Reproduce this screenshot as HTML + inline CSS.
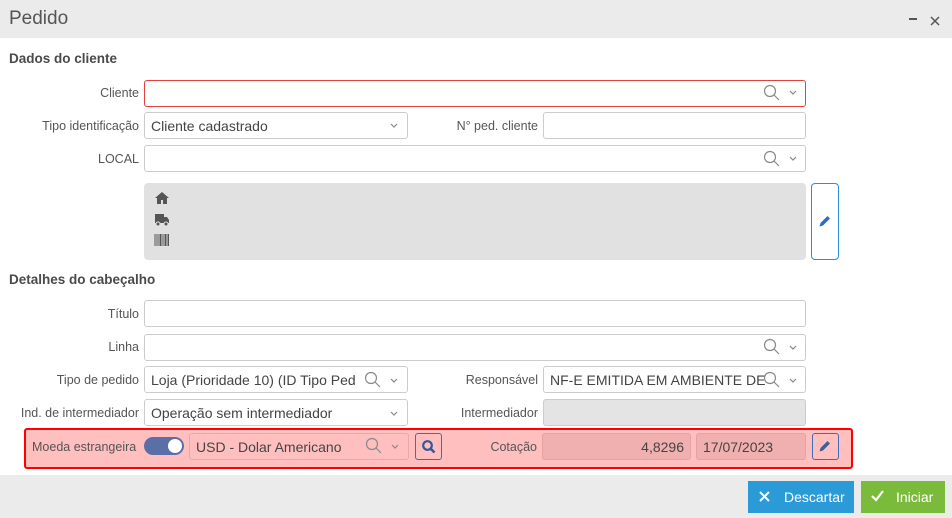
<!DOCTYPE html><html><head><meta charset="utf-8"><style>
*{box-sizing:border-box;margin:0;padding:0}
body{width:952px;height:518px;background:#fff;font-family:"Liberation Sans",sans-serif;position:relative;overflow:hidden;color:#555}
.a{position:absolute}
.hdr{left:0;top:0;width:952px;height:38px;background:#ebebeb}
.lbl{font-size:12.5px;color:#555;text-align:right}
.in{border:1px solid #ccc;border-radius:3px;background:#fff;height:27px;font-size:14px;color:#444;padding:5px 6px;white-space:nowrap;overflow:hidden}
.sec{font-size:13.5px;font-weight:bold;color:#4a4a4a}
</style></head><body>
<div class="a hdr"></div>
<div class="a" style="left:9px;top:8px;font-size:19px;color:#555">Pedido</div>
<div class="a" style="left:909px;top:18px;width:8px;height:2px;background:#555"></div>
<div class="a" style="left:930px;top:13px;width:10px;height:10px"><svg width="10" height="10"><path d="M1 1L9 9M9 1L1 9" stroke="#555" stroke-width="1.5"/></svg></div>
<div class="a sec" style="left:9px;top:51px">Dados do cliente</div>

<div class="a lbl" style="left:0;width:139px;top:86px">Cliente</div>
<div class="a in" style="left:144px;top:80px;width:662px;height:27px;border-color:#e0413a"></div>
<div class="a lbl" style="left:0;width:139px;top:119px">Tipo identificação</div>
<div class="a in" style="left:144px;top:112px;width:264px">Cliente cadastrado</div>
<div class="a lbl" style="left:400px;width:138px;top:119px">N° ped. cliente</div>
<div class="a in" style="left:543px;top:112px;width:263px"></div>
<div class="a lbl" style="left:0;width:139px;top:152px">LOCAL</div>
<div class="a in" style="left:144px;top:145px;width:662px"></div>
<div class="a" style="left:144px;top:183px;width:662px;height:77px;background:#e1e1e1;border-radius:4px"></div>
<svg class="a" style="left:154px;top:191px" width="16" height="14"><path d="M8 1L1 7h2v6h4V9h2v4h4V7h2z" fill="#555"/></svg>
<svg class="a" style="left:154px;top:213px" width="16" height="13"><path d="M1 1h9v9H1zM10 4h3l2 3v3h-5z" fill="#555"/><circle cx="4" cy="11" r="2" fill="#555" stroke="#e1e1e1"/><circle cx="12" cy="11" r="2" fill="#555" stroke="#e1e1e1"/></svg>
<svg class="a" style="left:154px;top:234px" width="16" height="12"><path d="M1 0v12M3 0v12M5 0v12M6.5 0v12M8 0v12M10 0v12M11.5 0v12M13 0v12M14.5 0v12" stroke="#555" stroke-width="1"/></svg>
<div class="a" style="left:811px;top:183px;width:28px;height:77px;border:1px solid #2b8fd6;border-radius:4px;background:#fff"></div>
<svg class="a" style="left:818px;top:214px" width="14" height="14"><path d="M1.5 12.5l1-3.5 7-7 2.5 2.5-7 7z" fill="#2b6fc0"/></svg>

<div class="a sec" style="left:9px;top:272px">Detalhes do cabeçalho</div>
<div class="a lbl" style="left:0;width:139px;top:307px">Título</div>
<div class="a in" style="left:144px;top:300px;width:662px"></div>
<div class="a lbl" style="left:0;width:139px;top:340px">Linha</div>
<div class="a in" style="left:144px;top:334px;width:662px"></div>
<div class="a lbl" style="left:0;width:139px;top:373px">Tipo de pedido</div>
<div class="a in" style="left:144px;top:366px;width:264px;padding-right:50px">Loja (Prioridade 10) (ID Tipo Ped</div>
<div class="a lbl" style="left:400px;width:138px;top:373px">Responsável</div>
<div class="a in" style="left:543px;top:366px;width:263px;padding-right:50px">NF-E EMITIDA EM AMBIENTE DE</div>
<div class="a lbl" style="left:0;width:139px;top:406px">Ind. de intermediador</div>
<div class="a in" style="left:144px;top:399px;width:264px">Operação sem intermediador</div>
<div class="a lbl" style="left:400px;width:138px;top:406px">Intermediador</div>
<div class="a in" style="left:543px;top:399px;width:263px;background:#e4e4e4"></div>

<div class="a" style="left:24px;top:428px;width:829px;height:41px;background:#ffbfbf;border:2px solid #f00;border-radius:3px"></div>
<div class="a lbl" style="left:32px;top:440px;font-size:12.5px">Moeda estrangeira</div>
<div class="a" style="left:144px;top:437px;width:40px;height:18px;border-radius:9px;background:#5b6ea8"></div>
<div class="a" style="left:168px;top:439px;width:14px;height:14px;border-radius:7px;background:#fff"></div>
<div class="a in" style="left:189px;top:433px;width:220px;background:#ffbfbf;border-color:#e8a8a8">USD - Dolar Americano</div>
<div class="a" style="left:415px;top:433px;width:27px;height:27px;border:1px solid #3e6db5;border-radius:3px"></div>
<svg class="a" style="left:421px;top:439px" width="15" height="15"><circle cx="6.5" cy="6.5" r="4.3" fill="none" stroke="#2f5aa0" stroke-width="2.2"/><path d="M9.5 9.5l4 4" stroke="#2f5aa0" stroke-width="2.6"/></svg>
<div class="a lbl" style="left:480px;width:57px;top:440px">Cotação</div>
<div class="a in" style="left:542px;top:433px;width:149px;background:#f0b0b0;border-color:#e8a0a0;text-align:right">4,8296</div>
<div class="a in" style="left:696px;top:433px;width:110px;background:#f0b0b0;border-color:#e8a0a0">17/07/2023</div>
<div class="a" style="left:812px;top:433px;width:27px;height:27px;border:1px solid #3e6db5;border-radius:3px"></div>
<svg class="a" style="left:818px;top:439px" width="14" height="14"><path d="M1.5 12.5l1-3.5 7-7 2.5 2.5-7 7z" fill="#3e5f9a"/></svg>

<div class="a" style="left:0;top:475px;width:952px;height:43px;background:#ebebeb"></div>
<div class="a" style="left:748px;top:481px;width:106px;height:32px;background:#2b9bd8;color:#fff;font-size:14px;padding:8px 0 0 36px">Descartar</div>
<svg class="a" style="left:759px;top:491px" width="11" height="11"><path d="M1 1l9 9M10 1l-9 9" stroke="#fff" stroke-width="2"/></svg>
<div class="a" style="left:861px;top:481px;width:84px;height:32px;background:#7bbb3b;color:#fff;font-size:14px;padding:8px 0 0 35px">Iniciar</div>
<svg class="a" style="left:871px;top:490px" width="13" height="12"><path d="M1 6l4 4 7-9" stroke="#fff" stroke-width="2.2" fill="none"/></svg>

<svg class="a" style="left:0;top:0" width="952" height="518">
<g fill="none" stroke="#888" stroke-width="1.2">
<circle cx="770" cy="91" r="5.5"/><path d="M774 95l5 5"/><path d="M790 91l3 3 3-3"/>
<path d="M391 124l3 3 3-3"/>
<circle cx="770" cy="157" r="5.5"/><path d="M774 161l5 5"/><path d="M790 157l3 3 3-3"/>
<circle cx="770" cy="345" r="5.5"/><path d="M774 349l5 5"/><path d="M790 346l3 3 3-3"/>
<circle cx="371" cy="378" r="5.5"/><path d="M375 382l5 5"/><path d="M391 379l3 3 3-3"/>
<circle cx="770" cy="378" r="5.5"/><path d="M774 382l5 5"/><path d="M790 379l3 3 3-3"/>
<path d="M391 412l3 3 3-3"/>
<circle cx="372" cy="444" r="5.5"/><path d="M376 448l5 5"/><path d="M392 445l3 3 3-3"/>
</g></svg>
</body></html>
